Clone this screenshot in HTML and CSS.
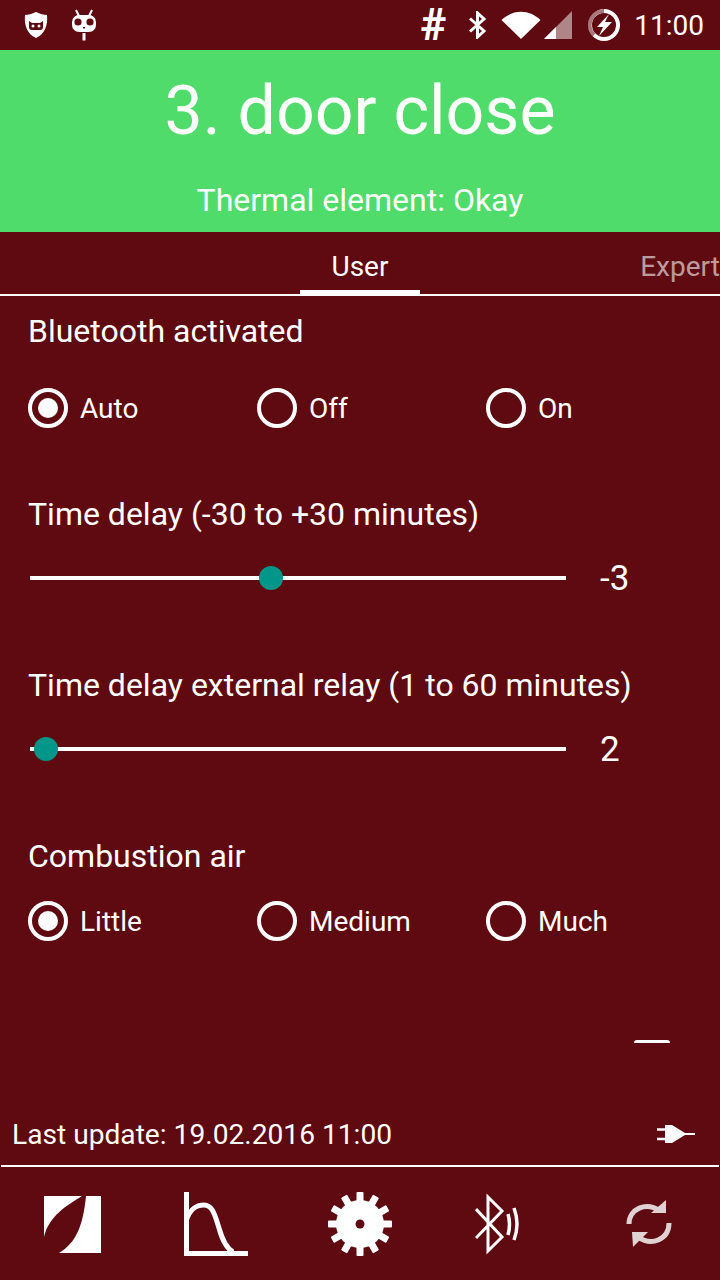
FILE: index.html
```html
<!DOCTYPE html>
<html>
	<head>
		<meta charset="UTF-8">
		<title>door close</title>
		<link rel="stylesheet" href="styles.css">
	</head>
	<body>
		<div class="page">
			<div class="status">
				<svg class="ic-shield" width="24" height="28" viewBox="0 0 24 28">
					<path fill="#fff" d="M12 1 C8 3 4 4 1 4 C0 14 3 23 12 27 C21 23 24 14 23 4 C20 4 16 3 12 1Z"/>
					<path fill="#5e0a10" d="M5 10 L8 12 H16 L19 10 V16 Q19 19 16 19 H8 Q5 19 5 16Z"/>
					<circle cx="9" cy="15" r="1.5" fill="#fff"/>
					<circle cx="15" cy="15" r="1.5" fill="#fff"/>
				</svg>
				<svg class="ic-robot" width="26" height="32" viewBox="0 0 26 32">
					<path stroke="#fff" stroke-width="2" d="M5 1 L8 7 M21 1 L18 7"/>
					<rect x="1" y="6" width="24" height="17" rx="7" fill="#fff"/>
					<circle cx="7" cy="13" r="3.6" fill="#5e0a10"/>
					<circle cx="19" cy="13" r="3.6" fill="#5e0a10"/>
					<rect x="12" y="18" width="2" height="1.4" fill="#5e0a10"/>
					<rect x="11.5" y="24" width="3" height="7.5" fill="#fff"/>
				</svg>
				<span class="hash">#</span>
				<svg class="ic-bt" width="20" height="28" viewBox="0 0 20 28">
					<path fill="none" stroke="#fff" stroke-width="3" d="M2 7.500 L16 20 L9.500 26 V2 L16 8 L2 20.500"/>
				</svg>
				<svg class="ic-wifi" width="40" height="28" viewBox="0 0 40 28">
					<path fill="#fff" d="M0.500 9 C12 -2 28 -2 39.500 9 L20 28Z"/>
				</svg>
				<svg class="ic-signal" width="28" height="28" viewBox="0 0 28 28">
					<path fill="#fff" opacity=".5" d="M28 0 V28 H0Z"/>
					<path fill="#fff" d="M12 16 V28 H0Z"/>
				</svg>
				<svg class="ic-batt" width="32" height="32" viewBox="0 0 32 32">
					<circle cx="16" cy="16" r="14" fill="none" stroke="#fff" stroke-width="4"/>
					<path fill="none" stroke="#5e0a10" stroke-opacity=".55" stroke-width="4" d="M16 2 A14 14 0 0 0 6 26"/>
					<path fill="#fff" d="M21 5 L9 18 H15 L11 27 L24 13 H17Z"/>
				</svg>
				<span class="clock">11:00</span>
			</div>

			<div class="header">
				<div class="title">3. door close</div>
				<div class="subtitle">Thermal element: Okay</div>
			</div>

			<div class="tabs">
				<div class="tab tab-on">User</div>
				<div class="tab tab-off">Expert</div>
			</div>

			<div class="content">
				<div class="label label-bt">Bluetooth activated</div>
				<div class="radios radios-bt">
					<div class="radio radio-on"><i></i>Auto</div>
					<div class="radio"><i></i>Off</div>
					<div class="radio"><i></i>On</div>
				</div>

				<div class="label label-delay">Time delay (-30 to +30 minutes)</div>
				<div class="slider">
					<div class="track"><b class="thumb" style="left: 241px"></b></div>
					<span class="value">-3</span>
				</div>

				<div class="label label-relay">Time delay external relay (1 to 60 minutes)</div>
				<div class="slider">
					<div class="track"><b class="thumb" style="left: 16px"></b></div>
					<span class="value">2</span>
				</div>

				<div class="label label-air">Combustion air</div>
				<div class="radios radios-air">
					<div class="radio radio-on"><i></i>Little</div>
					<div class="radio"><i></i>Medium</div>
					<div class="radio"><i></i>Much</div>
				</div>

				<div class="dash"></div>
			</div>

			<div class="update">
				<span>Last update: 19.02.2016 11:00</span>
				<svg width="38" height="18" viewBox="0 0 38 18">
					<path stroke="#fff" stroke-width="2.400" d="M0 4.500 H9 M0 14 H9"/>
					<path fill="#fff" d="M8 0 H15 L28 8 H38 V10 H28 L15 18 H8Z"/>
				</svg>
			</div>

			<div class="nav">
				<svg class="nav-logo" width="57" height="57" viewBox="0 0 57 57">
					<path fill="#fff" d="M0 0 H38 C22 10 5 20 0 41Z"/>
					<path fill="#fff" d="M42 0 H57 V57 H15 C32 47 39 30 42 0Z"/>
				</svg>
				<svg class="nav-curve" width="64" height="64" viewBox="0 0 64 64">
					<path fill="none" stroke="#fff" stroke-width="5" d="M2.500 0 V61.500 H64"/>
					<path fill="none" stroke="#fff" stroke-width="5" d="M2.500 28 C6 16 14 13 20 13 C29 13 31 24 35 36 C38 47 42 56 49 60"/>
				</svg>
				<svg class="nav-gear" width="64" height="64" viewBox="0 0 64 64">
					<g fill="#fff">
						<rect x="28.500" y="0" width="7" height="64" rx="1"/>
						<rect x="28.500" y="0" width="7" height="64" rx="1" transform="rotate(30 32 32)"/>
						<rect x="28.500" y="0" width="7" height="64" rx="1" transform="rotate(60 32 32)"/>
						<rect x="28.500" y="0" width="7" height="64" rx="1" transform="rotate(90 32 32)"/>
						<rect x="28.500" y="0" width="7" height="64" rx="1" transform="rotate(120 32 32)"/>
						<rect x="28.500" y="0" width="7" height="64" rx="1" transform="rotate(150 32 32)"/>
						<circle cx="32" cy="32" r="24"/>
					</g>
					<circle cx="32" cy="32" r="4.500" fill="#5e0a10"/>
				</svg>
				<svg class="nav-bt" width="46" height="62" viewBox="0 0 46 62">
					<path fill="none" stroke="#fff" stroke-width="3" d="M1 16 L27 44 L13 58 V4 L27 18 L1 45"/>
					<path fill="none" stroke="#fff" stroke-width="3.500" d="M33 21 Q36 31 33 42"/>
					<path fill="none" stroke="#fff" stroke-width="3.500" d="M39 15 Q45 31 39 47"/>
				</svg>
				<svg class="nav-sync" width="46" height="50" viewBox="0 0 46 50">
					<g fill="none" stroke="#e0d2d3" stroke-width="5">
						<path d="M3 25 C3 10 20 2 34 12"/>
						<path d="M43 24 C43 40 26 48 12 38"/>
					</g>
					<path fill="#e0d2d3" d="M40 1 V14 H25Z"/>
					<path fill="#e0d2d3" d="M6 33 H22 L7 48Z"/>
				</svg>
			</div>
		</div>
	</body>
</html>
```

FILE: styles.css
```css
*{
	margin: 0;
	padding: 0;
	box-sizing: border-box;
}
body{
	background: #5e0a10;
	color: #fff;
	font-family: Roboto, "Liberation Sans", sans-serif;
}
.page{
	width: 720px;
	height: 1280px;
	display: flex;
	flex-direction: column;
	overflow: hidden;
}

/* status bar */
.status{
	height: 50px;
	display: flex;
	align-items: center;
	padding-left: 24px;
}
.status svg{
	flex: none;
}
.ic-robot{
	margin-left: 23px;
}
.hash{
	margin-left: auto;
	font-size: 44px;
	font-weight: bold;
	line-height: 50px;
	width: 26px;
	text-align: center;
}
.ic-bt{
	margin-left: 22px;
}
.ic-wifi{
	margin-left: 13px;
}
.ic-signal{
	margin-left: 3px;
}
.ic-batt{
	margin-left: 16px;
}
.clock{
	margin-left: 14px;
	margin-right: 16px;
	font-size: 28px;
}

/* green header */
.header{
	height: 182px;
	background: #4fdc6a;
	text-align: center;
	padding-top: 21px;
}
.title{
	font-size: 68px;
	line-height: 80px;
}
.subtitle{
	margin-top: 29px;
	font-size: 32px;
	line-height: 40px;
}

/* tabs */
.tabs{
	height: 64px;
	display: flex;
	padding-left: 300px;
	border-bottom: 2px solid #fff;
}
.tab{
	flex: none;
	width: 120px;
	height: 62px;
	text-align: center;
	font-size: 28px;
	line-height: 70px;
}
.tab-on{
	border-bottom: 4px solid #fff;
}
.tab-off{
	margin-left: 200px;
	color: rgba(255,255,255,.6);
}

/* settings */
.content{
	flex: 1;
	padding-left: 28px;
	display: flex;
	flex-direction: column;
}
.label{
	font-size: 32px;
	line-height: 40px;
}
.label-bt{
	margin-top: 15px;
}
.label-delay{
	margin-top: 66px;
}
.label-relay{
	margin-top: 63px;
}
.label-air{
	margin-top: 63px;
}
.radios{
	display: flex;
}
.radios-bt{
	margin-top: 37px;
}
.radios-air{
	margin-top: 25px;
}
.radio{
	width: 229px;
	height: 40px;
	display: flex;
	align-items: center;
	font-size: 28px;
}
.radio i{
	width: 40px;
	height: 40px;
	margin-right: 12px;
	border: 4px solid #fff;
	border-radius: 50%;
	display: flex;
	align-items: center;
	justify-content: center;
}
.radio-on i::before{
	content: "";
	width: 20px;
	height: 20px;
	background: #fff;
	border-radius: 50%;
}
.slider{
	height: 48px;
	margin-top: 20px;
	padding-left: 2px;
	display: flex;
	align-items: center;
}
.track{
	position: relative;
	width: 536px;
	height: 4px;
	background: #fff;
}
.thumb{
	position: absolute;
	top: -10px;
	width: 24px;
	height: 24px;
	margin-left: -12px;
	background: #00968a;
	border-radius: 50%;
}
.value{
	margin-left: 34px;
	font-size: 35px;
}
.dash{
	width: 36px;
	height: 3px;
	margin-top: auto;
	margin-left: 606px;
	margin-bottom: 98px;
	background: #fff;
	border-radius: 3px 3px 0 0;
}

/* footer */
.update{
	height: 66px;
	margin: -40px 1px 0;
	padding: 2px 24px 0 11px;
	display: flex;
	align-items: center;
	justify-content: space-between;
	font-size: 28.150px;
	border-bottom: 2px solid #fff;
}
.nav{
	height: 113px;
	padding: 1px 0 0 44px;
	display: flex;
	align-items: center;
}
.nav-curve{
	margin-left: 83px;
}
.nav-gear{
	margin-left: 80px;
}
.nav-bt{
	margin-left: 83px;
}
.nav-sync{
	margin-left: 105px;
}
```
